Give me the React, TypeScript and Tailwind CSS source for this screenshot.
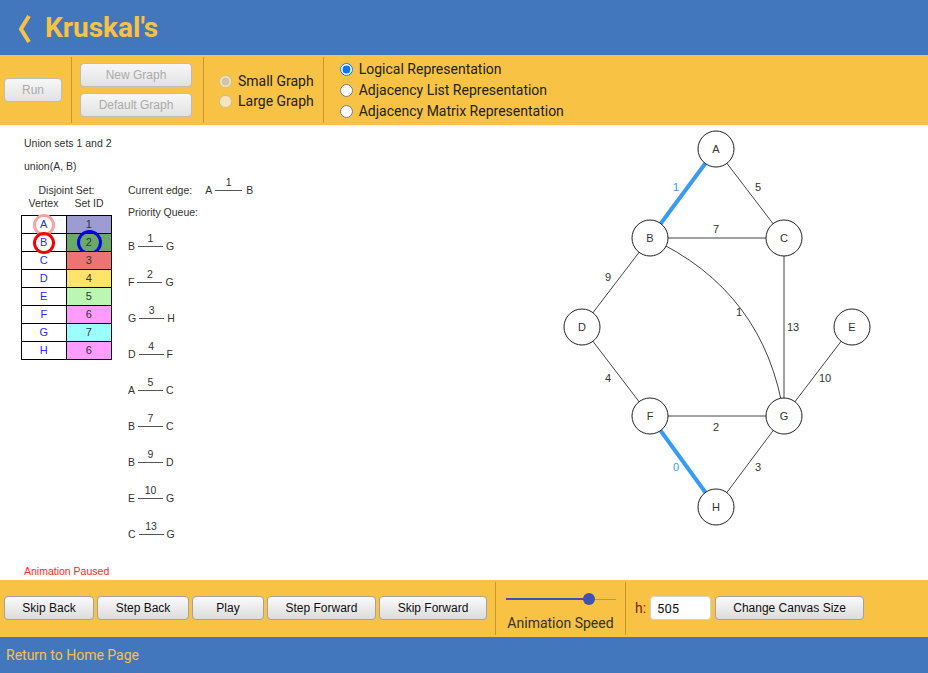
import { FC } from "react";

const btn =
  "h-[24px] rounded-[4px] border border-[#a3a3a3] bg-linear-to-b from-[#fafafa] to-[#dcdcdc] text-[12px] text-[#111] font-['Liberation_Sans',Arial,sans-serif]";
const btnOff =
  "h-[24px] rounded-[4px] border border-[#bdbdbd] bg-linear-to-b from-[#f7f7f7] to-[#e2e2e2] text-[12px] text-[#ababab] font-['Liberation_Sans',Arial,sans-serif]";

const rows = [
  { v: "A", id: 1, bg: "bg-[#9c9cd2]", ring: "border-[#f6a4a4]" },
  { v: "B", id: 2, bg: "bg-[#68ab68]", ring: "border-[#f20000]" },
  { v: "C", id: 3, bg: "bg-[#ee7474]", ring: "" },
  { v: "D", id: 4, bg: "bg-[#ffe36b]", ring: "" },
  { v: "E", id: 5, bg: "bg-[#bbf7b2]", ring: "" },
  { v: "F", id: 6, bg: "bg-[#ff9cff]", ring: "" },
  { v: "G", id: 7, bg: "bg-[#9cffff]", ring: "" },
  { v: "H", id: 6, bg: "bg-[#ff9cff]", ring: "" },
];

const queue: [string, string, number][] = [
  ["B", "G", 1],
  ["F", "G", 2],
  ["G", "H", 3],
  ["D", "F", 4],
  ["A", "C", 5],
  ["B", "C", 7],
  ["B", "D", 9],
  ["E", "G", 10],
  ["C", "G", 13],
];

const EdgeLink: FC<{ w: number; width: number }> = ({ w, width }) => (
  <span className="relative h-px bg-[#555] ml-[3px]" style={{ width }}>
    <span className="absolute left-0 right-0 bottom-[4px] text-center leading-[10px]">{w}</span>
  </span>
);

const nodes: Record<string, [number, number]> = {
  A: [716, 149],
  B: [650, 238],
  C: [784, 238],
  D: [582, 327],
  E: [852, 327],
  F: [650, 416],
  G: [784, 416],
  H: [716, 507],
};

const lines: [string, string, boolean][] = [
  ["A", "C", false],
  ["B", "C", false],
  ["B", "D", false],
  ["C", "G", false],
  ["E", "G", false],
  ["D", "F", false],
  ["F", "G", false],
  ["G", "H", false],
  ["A", "B", true],
  ["F", "H", true],
];

const labels: [number, number, string, boolean][] = [
  [676, 187, "1", true],
  [758, 187, "5", false],
  [716, 229, "7", false],
  [608, 277, "9", false],
  [739, 312, "1", false],
  [793, 327, "13", false],
  [825, 378, "10", false],
  [608, 378, "4", false],
  [716, 427, "2", false],
  [676, 467, "0", true],
  [758, 467, "3", false],
];

const Graph = () => (
  <svg width={368} height={455} viewBox="560 125 368 455" className="shrink-0" fontFamily="'Liberation Sans', Arial, sans-serif" fontSize={11}>
    {lines.map(([a, b, hot]) => (
      <line
        key={a + b}
        x1={nodes[a][0]}
        y1={nodes[a][1]}
        x2={nodes[b][0]}
        y2={nodes[b][1]}
        stroke={hot ? "#3a9bf5" : "#444"}
        strokeWidth={hot ? 4 : 1}
      />
    ))}
    <path d="M650 238 Q765 291 784 416" fill="none" stroke="#444" strokeWidth={1} />
    {labels.map(([x, y, t, hot], i) => (
      <text key={i} x={x} y={y} textAnchor="middle" dominantBaseline="central" fill={hot ? "#3a9bf5" : "#333"}>
        {t}
      </text>
    ))}
    {Object.entries(nodes).map(([n, [x, y]]) => (
      <g key={n}>
        <circle cx={x} cy={y} r={18} fill="#fff" stroke="#222" strokeWidth={1} />
        <text x={x} y={y} textAnchor="middle" dominantBaseline="central" fill="#333">
          {n}
        </text>
      </g>
    ))}
  </svg>
);

const Divider = () => <div className="self-stretch w-px my-[2px] bg-[#c8962f]" />;

export default function App() {
  return (
    <div className="w-[928px] h-[673px] flex flex-col bg-white overflow-hidden">
      {/* header */}
      <div className="h-[55px] shrink-0 bg-[#4377bd] flex items-center">
        <svg width={30} height={55} viewBox="0 0 30 55" className="ml-[2px]">
          <polyline points="27,16 19,29 27,42" fill="none" stroke="#f8c244" strokeWidth={4} />
        </svg>
        <h1 className="ml-[13px] text-[28px] font-bold text-[#f8c244] font-['Roboto',sans-serif] leading-none">Kruskal's</h1>
      </div>

      {/* top toolbar */}
      <div className="h-[70px] shrink-0 bg-[#f8c244] flex items-center font-['Roboto',sans-serif] text-[14px] text-[#222]">
        <button className={`${btnOff} w-[58px] ml-[4px]`}>Run</button>
        <div className="ml-[9px] self-stretch flex">
          <Divider />
        </div>
        <div className="ml-[8px] flex flex-col gap-[6px]">
          <button className={`${btnOff} w-[112px]`}>New Graph</button>
          <button className={`${btnOff} w-[112px]`}>Default Graph</button>
        </div>
        <div className="ml-[11px] self-stretch flex">
          <Divider />
        </div>
        <div className="ml-[15px] flex flex-col leading-[20px] mt-[2px]">
          <label className="flex items-center">
            <input type="radio" name="size" disabled defaultChecked className="m-0" />
            <span className="ml-[6px]">Small Graph</span>
          </label>
          <label className="flex items-center">
            <input type="radio" name="size" disabled className="m-0" />
            <span className="ml-[6px]">Large Graph</span>
          </label>
        </div>
        <div className="ml-[9px] self-stretch flex">
          <Divider />
        </div>
        <div className="ml-[16px] flex flex-col leading-[21px]">
          <label className="flex items-center">
            <input type="radio" name="rep" defaultChecked className="m-0" />
            <span className="ml-[6px]">Logical Representation</span>
          </label>
          <label className="flex items-center">
            <input type="radio" name="rep" className="m-0" />
            <span className="ml-[6px]">Adjacency List Representation</span>
          </label>
          <label className="flex items-center">
            <input type="radio" name="rep" className="m-0" />
            <span className="ml-[6px]">Adjacency Matrix Representation</span>
          </label>
        </div>
      </div>

      {/* canvas */}
      <div className="h-[455px] shrink-0 flex">
        <div className="flex-1 flex flex-col pl-[24px] pt-[12px] text-[10.5px] leading-[13px] text-[#333] font-['Liberation_Sans',Arial,sans-serif]">
          <div>Union sets 1 and 2</div>
          <div className="mt-[10px]">union(A, B)</div>
          <div className="flex mt-[11px] -ml-[3px]">
            <div className="w-[91px] flex flex-col">
              <div className="text-center">Disjoint Set:</div>
              <div className="flex">
                <span className="w-[45px] text-center">Vertex</span>
                <span className="w-[46px] text-center">Set ID</span>
              </div>
              <div className="mt-[5px] border-t border-l border-black">
                {rows.map((r, i) => (
                  <div key={i} className="flex h-[18px]">
                    <div className="relative w-[45px] border-r border-b border-black flex items-center justify-center text-[#2b2bff] text-[11px]">
                      {r.v}
                      {r.ring && (
                        <span className={`absolute left-[11px] top-[-2px] w-[22px] h-[22px] rounded-full border-[3px] ${r.ring}`} />
                      )}
                    </div>
                    <div className={`relative w-[46px] border-r border-b border-black flex items-center justify-center text-[11px] ${r.bg}`}>
                      {r.id}
                      {i === 1 && (
                        <span className="absolute left-[10px] top-[-4px] w-[25px] h-[25px] rounded-full border-[3px] border-[#0000e6]" />
                      )}
                    </div>
                  </div>
                ))}
              </div>
            </div>
            <div className="ml-[16px] flex flex-col">
              <div className="flex items-center h-[13px]">
                <span>Current edge:</span>
                <span className="ml-[13px]">A</span>
                <EdgeLink w={1} width={27} />
                <span className="ml-[4px]">B</span>
              </div>
              <div className="mt-[9px]">Priority Queue:</div>
              <div className="mt-[9px] flex flex-col">
                {queue.map(([a, b, w], i) => (
                  <div key={i} className="flex items-center h-[36px]">
                    <span>{a}</span>
                    <EdgeLink w={w} width={25} />
                    <span className="ml-[3px]">{b}</span>
                  </div>
                ))}
              </div>
            </div>
          </div>
          <div className="mt-auto mb-[2px] text-[#ff2b2b]">Animation Paused</div>
        </div>
        <Graph />
      </div>

      {/* bottom toolbar */}
      <div className="h-[57px] shrink-0 bg-[#f8c244] flex items-center font-['Roboto',sans-serif] text-[14px]">
        <div className="flex items-center gap-[3px] ml-[4px] -mt-[1px]">
          <button className={`${btn} w-[90px]`}>Skip Back</button>
          <button className={`${btn} w-[92px]`}>Step Back</button>
          <button className={`${btn} w-[72px]`}>Play</button>
          <button className={`${btn} w-[109px]`}>Step Forward</button>
          <button className={`${btn} w-[108px]`}>Skip Forward</button>
        </div>
        <div className="ml-[8px] self-stretch flex">
          <Divider />
        </div>
        <div className="self-stretch w-[129px] flex flex-col items-center pt-[13px]">
          <div className="relative w-[110px] h-[12px] flex items-center">
            <div className="h-[1.5px] w-[83px] bg-[#3f51b5]" />
            <div className="h-[1px] flex-1 bg-[#a39a7f]" />
            <span className="absolute left-[77px] top-0 w-[12px] h-[12px] rounded-full bg-[#3f51b5]" />
          </div>
          <div className="mt-[10px] leading-[16px] text-[#333]">Animation Speed</div>
        </div>
        <div className="self-stretch flex">
          <Divider />
        </div>
        <span className="ml-[9px] text-[#8a1c1c] -mt-[1px]">h:</span>
        <input
          defaultValue="505"
          className="ml-[4px] -mt-[1px] w-[61px] h-[24px] rounded-[4px] bg-white border border-[#d4d4d4] pl-[6px] text-[13px] text-[#111] outline-none"
        />
        <button className={`${btn} w-[149px] ml-[4px] -mt-[1px]`}>Change Canvas Size</button>
      </div>

      {/* footer */}
      <div className="flex-1 bg-[#4377bd] flex items-center pl-[6px]">
        <a className="text-[14px] text-[#f8c244] font-['Roboto',sans-serif]">Return to Home Page</a>
      </div>
    </div>
  );
}
